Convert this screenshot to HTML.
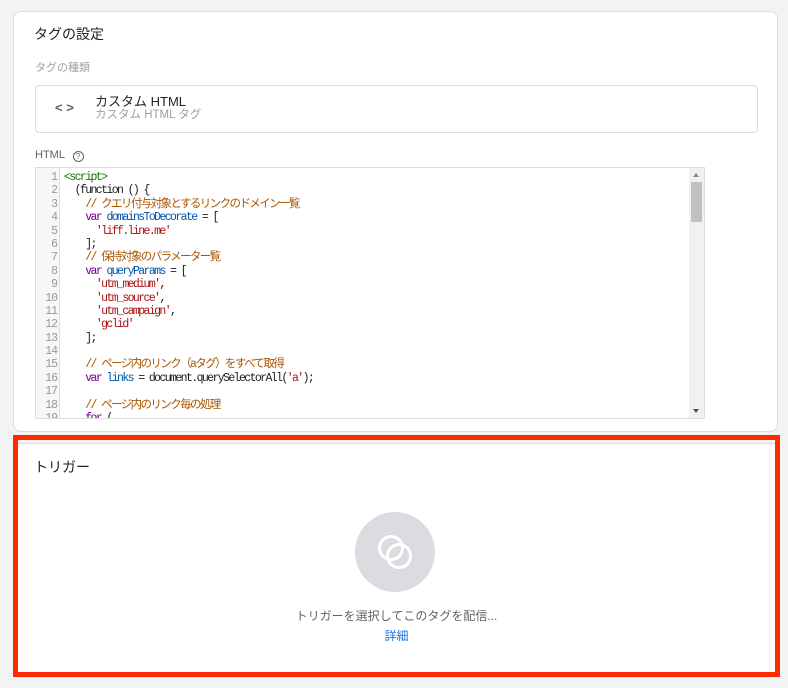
<!DOCTYPE html>
<html><head><meta charset="utf-8"><style>
*{box-sizing:border-box;margin:0;padding:0}
body{width:788px;height:688px;background:#f1f3f4;font-family:"Liberation Sans","Noto Sans CJK JP",sans-serif;position:relative;overflow:hidden;color:#202124}
.card1{position:absolute;left:13px;top:11px;width:765px;height:421px;background:#fff;border:1px solid #dadce0;border-radius:8px}
.t{position:absolute;font-size:14px;line-height:1.2}
.box{position:absolute;left:21px;top:73px;width:723px;height:48px;border:1px solid #dadce0;border-radius:4px}
.ed{position:absolute;left:21px;top:155px;width:670px;height:252px;border:1px solid #ddd;background:#fff;overflow:hidden}
.gut{position:absolute;left:0;top:0;width:24px;height:100%;background:#f7f7f7;border-right:1px solid #ddd}
.code{position:absolute;left:0;top:3px;font-family:"Liberation Mono","Noto Sans CJK JP",monospace;font-size:11.5px;letter-spacing:-1.6px;line-height:13.4px}
.code div{height:13.4px;white-space:pre}
.n{display:inline-block;width:21px;text-align:right;color:#999;margin-right:7px;letter-spacing:-1px}
.c{color:#a50}.k{color:#708}.v{color:#05a}.s{color:#a11}.g{color:#170}
.sb{position:absolute;right:0;top:0;width:15px;height:100%;background:#f1f1f1}
.th{position:absolute;left:2px;top:14px;width:11px;height:40px;background:#c1c1c1}
.red{position:absolute;left:13px;top:435px;width:767px;height:242px;border:5px solid #ff2a00}
.inner{position:absolute;left:0;top:3px;right:0;bottom:0;background:#fff;border-top:1px solid #dadce0}
</style></head><body>
<div class="card1">
<div class="t" style="left:20px;top:14px;font-size:14px">タグの設定</div>
<div class="t" style="left:21px;top:50px;font-size:11px;color:#9aa0a6">タグの種類</div>
<div class="box">
<div class="t" style="left:19px;top:14px;font-size:13px;color:#5f6368;font-weight:bold">&lt;&nbsp;&gt;</div>
<div class="t" style="left:59px;top:8px;font-size:13px;color:#202124">カスタム HTML</div>
<div class="t" style="left:59px;top:23px;font-size:11.5px;color:#9aa0a6">カスタム HTML タグ</div>
</div>
<div class="t" style="left:21px;top:137px;font-size:11px;color:#5f6368">HTML <span style="display:inline-block;width:11px;height:11px;border:1px solid #5f6368;border-radius:50%;font-size:8px;text-align:center;line-height:10px;margin-left:5px;vertical-align:-1px">?</span></div>
<div class="ed"><div class="gut"></div>
<div class="code"><div><span class="n">1</span><span class="g">&lt;script&gt;</span></div><div><span class="n">2</span>  (function () {</div><div><span class="n">3</span>    <span class="c">// クエリ付与対象とするリンクのドメイン一覧</span></div><div><span class="n">4</span>    <span class="k">var</span> <span class="v">domainsToDecorate</span> = [</div><div><span class="n">5</span>      <span class="s">'liff.line.me'</span></div><div><span class="n">6</span>    ];</div><div><span class="n">7</span>    <span class="c">// 保持対象のパラメーター覧</span></div><div><span class="n">8</span>    <span class="k">var</span> <span class="v">queryParams</span> = [</div><div><span class="n">9</span>      <span class="s">'utm_medium'</span>,</div><div><span class="n">10</span>      <span class="s">'utm_source'</span>,</div><div><span class="n">11</span>      <span class="s">'utm_campaign'</span>,</div><div><span class="n">12</span>      <span class="s">'gclid'</span></div><div><span class="n">13</span>    ];</div><div><span class="n">14</span></div><div><span class="n">15</span>    <span class="c">// ページ内のリンク（aタグ）をすべて取得</span></div><div><span class="n">16</span>    <span class="k">var</span> <span class="v">links</span> = document.querySelectorAll(<span class="s">'a'</span>);</div><div><span class="n">17</span></div><div><span class="n">18</span>    <span class="c">// ページ内のリンク毎の処理</span></div><div><span class="n">19</span>    <span class="k">for</span> (</div></div>
<div class="sb"><div class="th"></div>
<div style="position:absolute;left:4px;top:5px;border:3px solid transparent;border-bottom:4px solid #888;border-top:0"></div>
<div style="position:absolute;left:4px;bottom:5px;border:3px solid transparent;border-top:4px solid #555;border-bottom:0"></div>
</div>
</div>
</div>
<div class="red"><div class="inner">
<div class="t" style="left:16px;top:15px;font-size:14px">トリガー</div>
<div style="position:absolute;left:337px;top:68px;width:80px;height:80px;border-radius:50%;background:#dadce0">
<svg width="80" height="80" viewBox="0 0 80 80"><circle cx="36" cy="36" r="11.5" fill="none" stroke="#fff" stroke-width="3"/><circle cx="44" cy="44" r="11.5" fill="none" stroke="#fff" stroke-width="3"/></svg>
</div>
<div class="t" style="left:0;right:0;text-align:center;top:165px;font-size:12px;color:#5f6368">トリガーを選択してこのタグを配信...</div>
<div class="t" style="left:0;right:0;text-align:center;top:185px;font-size:12px;color:#1a73e8">詳細</div>
</div></div>
</body></html>
